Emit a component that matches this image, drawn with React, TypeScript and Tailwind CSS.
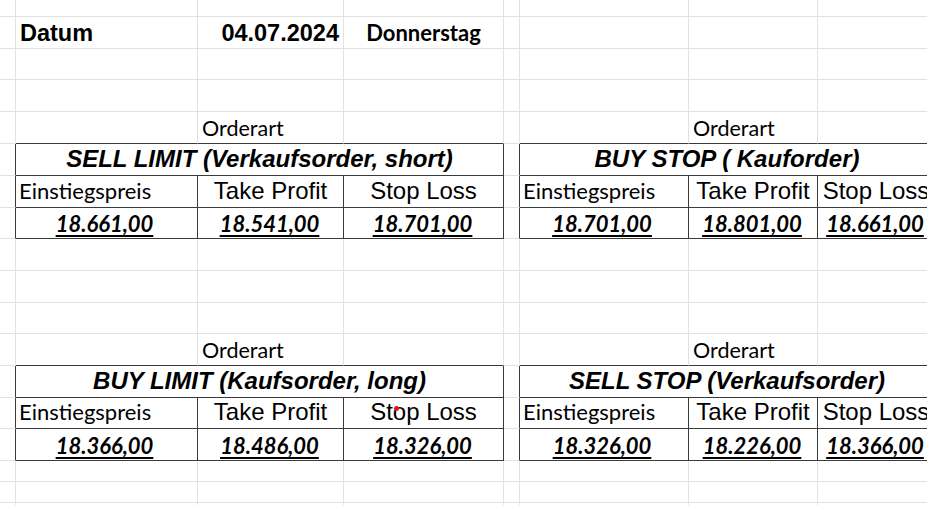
import React from 'react';
import clsx from 'clsx';

// --- Fonts ---
const arial = "font-['Liberation_Sans',Arial,sans-serif]";
const calibri = "font-['Lato','Liberation_Sans',sans-serif]";

const DARK_R = 'border-r-[#3a3a3a]';
const DARK_B = 'border-b-[#3a3a3a]';

interface CellProps {
    span?: 1 | 3;
    r?: boolean;
    b?: boolean;
    className?: string;
    children?: React.ReactNode;
}

const Cell = ({ span = 1, r, b, className, children }: CellProps) => (
    <div
        className={clsx(
            'relative flex items-end whitespace-nowrap border-r border-b text-black',
            r ? DARK_R : 'border-r-[#e1e1e1]',
            b ? DARK_B : 'border-b-[#e1e1e1]',
            span === 3 && 'col-span-3',
            className
        )}
    >
        {children}
    </div>
);

const EmptyRow = () => (
    <>
        {Array.from({ length: 8 }).map((_, i) => (
            <Cell key={i} />
        ))}
    </>
);

interface Order {
    title: string;
    entry: string;
    takeProfit: string;
    stopLoss: string;
}

const Value = ({ children }: { children: React.ReactNode }) => (
    <span className={clsx(calibri, 'text-[22px] font-bold italic underline decoration-[1.5px] underline-offset-[3px] leading-none')}>
        {children}
    </span>
);

// one block of two orders side by side: Orderart row, title, headers, values
const OrderBlock = ({ left, right, dot }: { left: Order; right: Order; dot?: boolean }) => (
    <>
        {/* Orderart */}
        <Cell />
        <Cell b />
        <Cell b className="pl-[4px] pb-[4px]">
            <span className={clsx(calibri, 'text-[21.5px] leading-none')}>Orderart</span>
        </Cell>
        <Cell b />
        <Cell />
        <Cell b />
        <Cell b className="pl-[4px] pb-[4px]">
            <span className={clsx(calibri, 'text-[21.5px] leading-none')}>Orderart</span>
        </Cell>
        <Cell b />

        {/* Title */}
        <Cell r />
        <Cell span={3} r b className="justify-center pb-[4px]">
            <span className={clsx(arial, 'text-[24px] font-bold italic leading-none')}>{left.title}</span>
        </Cell>
        <Cell r />
        <Cell span={3} r b className="justify-center pb-[4px]">
            <span className={clsx(arial, 'text-[24px] font-bold italic leading-none')}>{right.title}</span>
        </Cell>

        {/* Headers */}
        {[0, 1].map(side => (
            <React.Fragment key={side}>
                <Cell r />
                <Cell r b className="pl-[3px] pb-[5px]">
                    <span className={clsx(calibri, 'text-[22px] leading-none')}>Einstiegspreis</span>
                </Cell>
                <Cell r b className="justify-center pb-[4px]">
                    <span className={clsx(arial, 'text-[24px] leading-none')}>Take Profit</span>
                </Cell>
                <Cell r b className="justify-center pb-[4px]">
                    <span className={clsx(arial, 'text-[24px] leading-none')}>Stop Loss</span>
                    {dot && side === 0 && (
                        <span className="absolute left-[50px] top-[8px] h-[5px] w-[5px] rounded-full bg-[#e8141b]" />
                    )}
                </Cell>
            </React.Fragment>
        ))}

        {/* Values */}
        {[left, right].map((o, i) => (
            <React.Fragment key={i}>
                <Cell r />
                <Cell r b className="justify-center pb-[3px] pr-[4px]">
                    <Value>{o.entry}</Value>
                </Cell>
                <Cell r b className="justify-center pb-[3px] pr-[2px]">
                    <Value>{o.takeProfit}</Value>
                </Cell>
                <Cell r b className="justify-center pb-[3px] pr-[2px]">
                    <Value>{o.stopLoss}</Value>
                </Cell>
            </React.Fragment>
        ))}
    </>
);

const App = () => {
    return (
        <div className="h-[505px] w-[927px] overflow-hidden bg-white">
            <div className="grid w-[935px] grid-cols-[16px_182px_146px_160px_16px_169px_129px_117px] grid-rows-[17px_32px_31px_32px_32px_32px_32px_31px_32px_32px_31px_32px_32px_31px_32px_21px_21px_21px]">
                <EmptyRow />

                {/* Datum row */}
                <Cell />
                <Cell className="pl-[4px] pb-[3px]">
                    <span className={clsx(arial, 'text-[23.5px] font-bold leading-none')}>Datum</span>
                </Cell>
                <Cell className="justify-end pr-[4px] pb-[3px]">
                    <span className={clsx(arial, 'text-[23.5px] font-bold leading-none')}>04.07.2024</span>
                </Cell>
                <Cell className="justify-center pb-[4px]">
                    <span className={clsx(calibri, 'text-[22px] font-bold leading-none')}>Donnerstag</span>
                </Cell>
                <Cell />
                <Cell />
                <Cell />
                <Cell />

                <EmptyRow />
                <EmptyRow />

                <OrderBlock
                    left={{ title: 'SELL LIMIT (Verkaufsorder, short)', entry: '18.661,00', takeProfit: '18.541,00', stopLoss: '18.701,00' }}
                    right={{ title: 'BUY STOP ( Kauforder)', entry: '18.701,00', takeProfit: '18.801,00', stopLoss: '18.661,00' }}
                />

                <EmptyRow />
                <EmptyRow />
                <EmptyRow />

                <OrderBlock
                    dot
                    left={{ title: 'BUY LIMIT (Kaufsorder, long)', entry: '18.366,00', takeProfit: '18.486,00', stopLoss: '18.326,00' }}
                    right={{ title: 'SELL STOP (Verkaufsorder)', entry: '18.326,00', takeProfit: '18.226,00', stopLoss: '18.366,00' }}
                />

                <EmptyRow />
                <EmptyRow />
                <EmptyRow />
            </div>
        </div>
    );
};

export default App;
